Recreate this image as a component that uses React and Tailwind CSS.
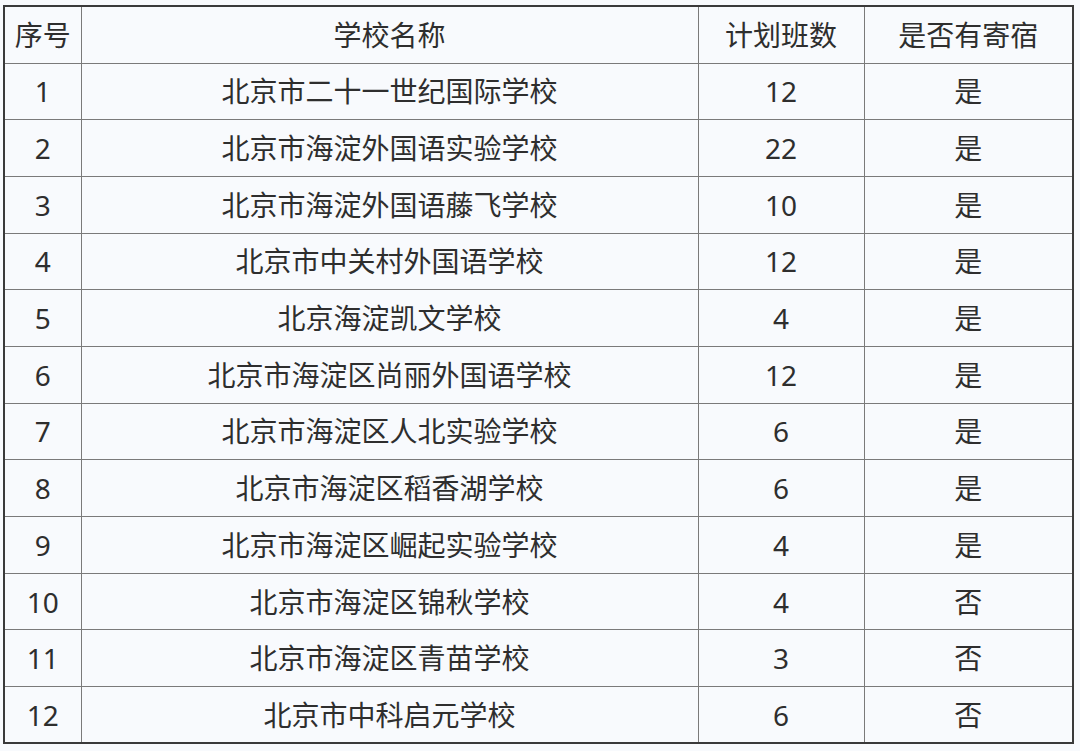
const rows = [
  ['1', '北京市二十一世纪国际学校', '12', '是'],
  ['2', '北京市海淀外国语实验学校', '22', '是'],
  ['3', '北京市海淀外国语藤飞学校', '10', '是'],
  ['4', '北京市中关村外国语学校', '12', '是'],
  ['5', '北京海淀凯文学校', '4', '是'],
  ['6', '北京市海淀区尚丽外国语学校', '12', '是'],
  ['7', '北京市海淀区人北实验学校', '6', '是'],
  ['8', '北京市海淀区稻香湖学校', '6', '是'],
  ['9', '北京市海淀区崛起实验学校', '4', '是'],
  ['10', '北京市海淀区锦秋学校', '4', '否'],
  ['11', '北京市海淀区青苗学校', '3', '否'],
  ['12', '北京市中科启元学校', '6', '否'],
];

const cell = 'border-[1.5px] border-[#7a7a7a] text-center align-middle p-0 font-normal';

export default function App() {
  return (
    <div
      className="w-[1080px] h-[751px] bg-[#f8fafd] pt-[5px] pl-[3px] text-[#2e2e2e] text-[28px] leading-none"
      style={{ fontFamily: '"Noto Sans", "Noto Sans CJK SC", sans-serif' }}
    >
      <table className="w-[1069px] table-fixed border-collapse border-2 border-[#3a3a3a]">
        <colgroup>
          <col className="w-[77px]" />
          <col className="w-[617px]" />
          <col className="w-[166px]" />
          <col className="w-[209px]" />
        </colgroup>
        <thead>
          <tr className="h-[57px]">
            <th className={cell}>序号</th>
            <th className={cell}>学校名称</th>
            <th className={cell}>计划班数</th>
            <th className={cell}>是否有寄宿</th>
          </tr>
        </thead>
        <tbody>
          {rows.map((r) => (
            <tr key={r[0]} className="h-[56.7px]">
              {r.map((v, i) => (
                <td key={i} className={cell}>{v}</td>
              ))}
            </tr>
          ))}
        </tbody>
      </table>
    </div>
  );
}
